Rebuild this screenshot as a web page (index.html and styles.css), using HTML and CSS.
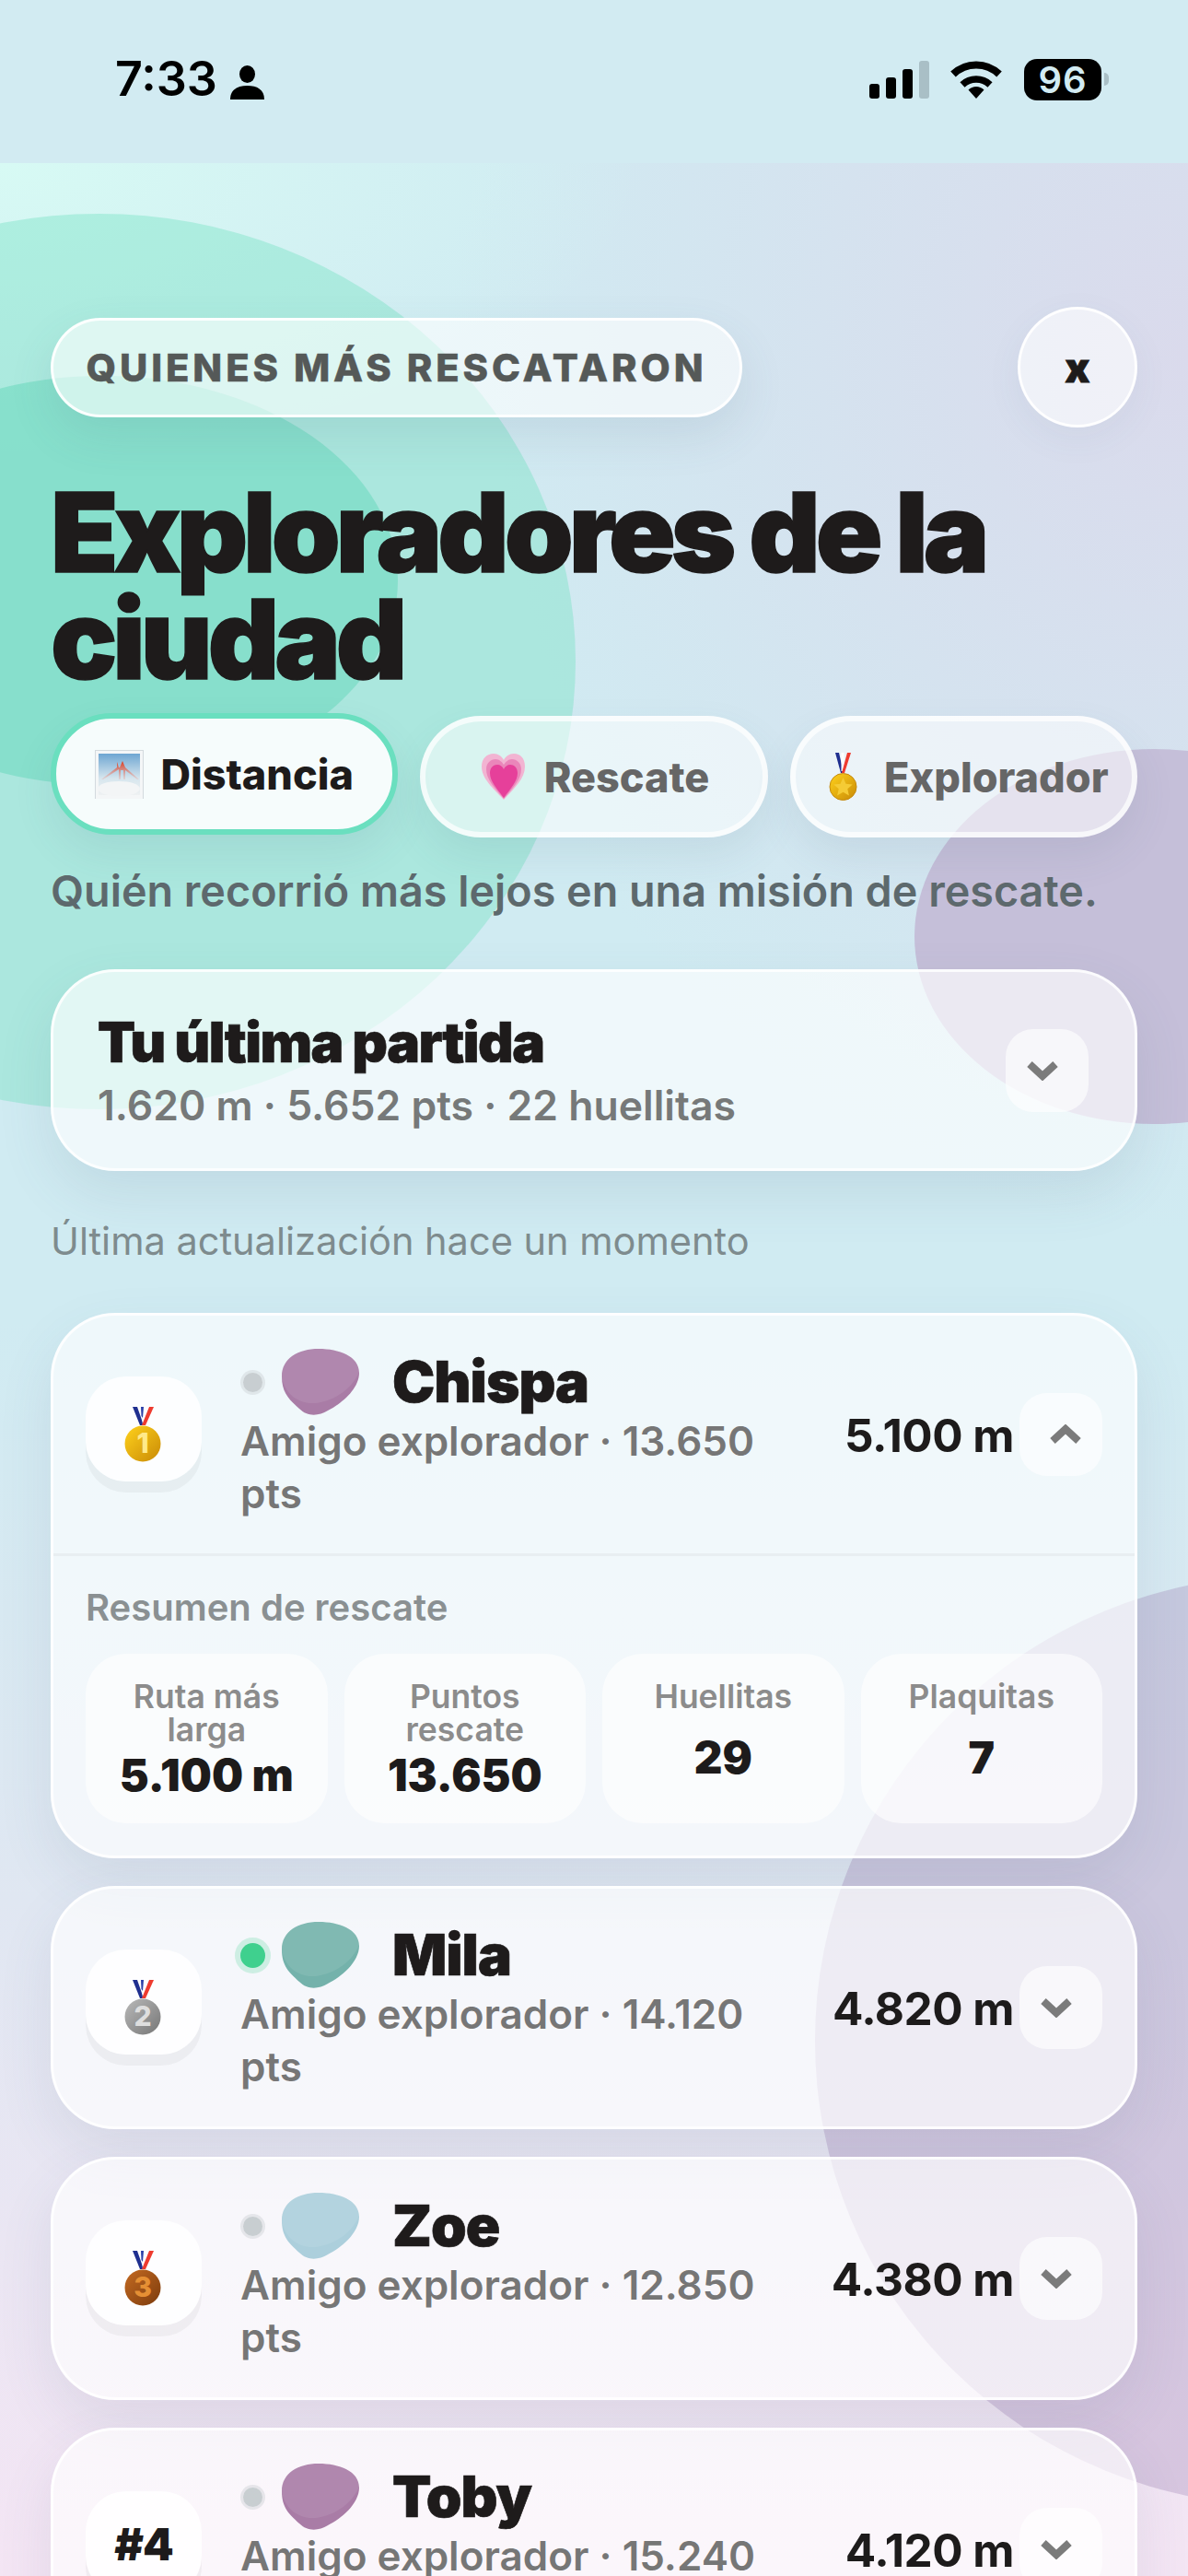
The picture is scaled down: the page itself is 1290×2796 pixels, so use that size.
FILE: index.html
```html
<!DOCTYPE html>
<html lang="es">
<head>
  <meta charset="UTF-8" />
  <meta name="viewport" content="width=device-width, initial-scale=1.0" />
  <title>Exploradores de la ciudad</title>
  <link rel="stylesheet" href="styles.css">
</head>
<body>

<svg class="defs" width="0" height="0">
  <defs>
    <linearGradient id="gold" x1="0" y1="0" x2="1" y2="1">
      <stop offset="0" stop-color="#ffd21c"/>
      <stop offset="1" stop-color="#c98a06"/>
    </linearGradient>
    <linearGradient id="silver" x1="0" y1="0" x2="1" y2="1">
      <stop offset="0" stop-color="#b9b9b9"/>
      <stop offset="1" stop-color="#767676"/>
    </linearGradient>
    <linearGradient id="bronze" x1="0" y1="0" x2="1" y2="1">
      <stop offset="0" stop-color="#c46a22"/>
      <stop offset="1" stop-color="#7c3b0c"/>
    </linearGradient>
    <linearGradient id="sky" x1="0" y1="0" x2="0" y2="1">
      <stop offset="0" stop-color="#6ea6d2"/>
      <stop offset="0.6" stop-color="#d7e6ee"/>
      <stop offset="1" stop-color="#eef1f2"/>
    </linearGradient>
    <linearGradient id="fog" x1="0" y1="0" x2="0" y2="1">
      <stop offset="0" stop-color="#e03a1a"/>
      <stop offset="1" stop-color="#f28a78" stop-opacity="0.2"/>
    </linearGradient>
    <symbol id="ribbon" viewBox="0 0 40 60">
      <path d="M9 0h5l7 20h-4z" fill="#1f2f8f"/>
      <path d="M18 0h3l1 14-2 6z" fill="#fff"/>
      <path d="M18 0h3l-1 12-1.500-2z" fill="#2b3fa8"/>
      <path d="M27 0h5l-9 20h-4z" fill="#ee3b2f"/>
    </symbol>
    <symbol id="chev" viewBox="0 0 36 22">
      <path d="M4 4l14 13L32 4" fill="none" stroke="currentColor" stroke-width="8" stroke-linejoin="miter"/>
    </symbol>
    <symbol id="blob" viewBox="0 0 84 72">
      <path d="M0 30C0 10 18 0 40 0c22 0 44 8 44 26 0 18-20 34-34 41-10 6-22 7-31-2C8 55 0 48 0 30z" fill="currentColor"/>
      <path d="M0 30C0 10 18 0 40 0c22 0 44 8 44 25-8 20-32 35-54 34C12 57 2 44 0 30z" fill="#fff" fill-opacity="0.09"/>
    </symbol>
  </defs>
</svg>

<div class="status">
  <div class="status-left">
    <span class="clock">7:33</span>
    <svg class="person" viewBox="0 0 37 37"><ellipse cx="18.500" cy="9.500" rx="8.500" ry="9.500"/><path d="M0 37c0-11 8-15 18.500-15S37 26 37 37z"/></svg>
  </div>
  <div class="status-right">
    <div class="signal"><i class="b1"></i><i class="b2"></i><i class="b3"></i><i class="b4"></i></div>
    <svg class="wifi" viewBox="0 0 58 42">
      <path d="M4 15.500a36 36 0 0 1 50 0" fill="none" stroke="#000" stroke-width="8"/>
      <path d="M14 27a22 22 0 0 1 30 0" fill="none" stroke="#000" stroke-width="7.500"/>
      <path d="M20.500 32.500a12 12 0 0 1 17 0L29 42z"/>
    </svg>
    <div class="battery"><span>96</span></div>
    <div class="nub"></div>
  </div>
</div>

<div class="page">
  <div class="blob-bg green-a"></div>
  <div class="blob-bg green-b"></div>
  <div class="blob-bg purple-a"></div>
  <div class="blob-bg purple-b"></div>

  <div class="top-row">
    <div class="eyebrow">QUIENES MÁS RESCATARON</div>
    <button class="close">x</button>
  </div>

  <h1>Exploradores de la ciudad</h1>

  <div class="tabs">
    <div class="tab active">
      <svg class="tab-icon" viewBox="0 0 53 53">
        <rect x="0.500" y="0.500" width="52" height="53" fill="#f4f6f7" stroke="#d3dade"/>
        <rect x="4" y="4" width="45" height="45" fill="url(#sky)"/>
        <path d="M24 13l2 6h1l3-7 3 7 15 13h-2L33 22v10h-2V22l-3 0v10h-2V21L9 32H7l17-13z" fill="url(#fog)"/>
        <ellipse cx="26" cy="42" rx="23" ry="8" fill="#f3f5f6"/>
      </svg>
      <span>Distancia</span>
    </div>
    <div class="tab">
      <svg class="tab-icon" viewBox="0 0 53 53">
        <path d="M27 51C15 38 3 28 3 15 3 6 9 1 16 1c5 0 9 3 11 7 2-4 6-7 11-7 7 0 12 5 12 14 0 13-11 23-23 36z" fill="#f2b4d2"/>
        <path d="M27 50C17 38 8 29 8 18c0-7 5-11 10-11 4 0 7 3 9 6 2-3 5-6 9-6 5 0 10 4 10 11 0 11-9 20-19 32z" fill="#ea86ba"/>
        <path d="M27 49C19 38 12 31 12 22c0-6 4-9 8-9 3 0 6 2 7 5 1-3 4-5 7-5 4 0 8 3 8 9 0 9-7 16-15 27z" fill="#e6409a"/>
      </svg>
      <span>Rescate</span>
    </div>
    <div class="tab">
      <svg class="tab-icon" viewBox="0 0 53 53">
        <path d="M18 0h4l5 22h-3z" fill="#1f2f8f"/>
        <path d="M24.500 0h3v20h-3z" fill="#fff"/>
        <path d="M31 0h4l-7 22h-3z" fill="#ee3b2f"/>
        <circle cx="26.500" cy="37" r="14.500" fill="url(#gold)" stroke="#c58a10"/>
        <path d="M26.500 27l3 6.700 7.200.7-5.400 4.800 1.600 7.200-6.400-3.700-6.400 3.700 1.600-7.200-5.400-4.800 7.200-.7z" fill="#f5cb35"/>
      </svg>
      <span>Explorador</span>
    </div>
  </div>

  <p class="lead">Quién recorrió más lejos en una misión de rescate.</p>

  <div class="last-run">
    <div class="last-text">
      <h2>Tu última partida</h2>
      <p>1.620 m · 5.652 pts · 22 huellitas</p>
    </div>
    <div class="toggle"><svg class="chev down"><use href="#chev"/></svg></div>
  </div>

  <p class="updated">Última actualización hace un momento</p>

  <div class="card">
    <div class="row">
      <div class="rank">
        <svg class="medal" viewBox="0 0 40 60">
          <use href="#ribbon"/>
          <circle cx="20" cy="40" r="19.500" fill="url(#gold)"/>
          <text x="20" y="50" class="medal-num num-gold">1</text>
        </svg>
      </div>
      <div class="who">
        <div class="name-row">
          <i class="dot"></i>
          <svg class="avatar lilac"><use href="#blob"/></svg>
          <span class="name">Chispa</span>
        </div>
        <p class="meta">Amigo explorador · 13.650 pts</p>
      </div>
      <div class="dist">5.100 m</div>
      <div class="toggle"><svg class="chev up"><use href="#chev"/></svg></div>
    </div>
    <div class="summary">
      <p class="summary-title">Resumen de rescate</p>
      <div class="stats">
        <div class="stat"><span class="stat-label">Ruta más larga</span><b>5.100 m</b></div>
        <div class="stat"><span class="stat-label">Puntos rescate</span><b>13.650</b></div>
        <div class="stat"><span class="stat-label">Huellitas</span><b>29</b></div>
        <div class="stat"><span class="stat-label">Plaquitas</span><b>7</b></div>
      </div>
    </div>
  </div>

  <div class="card">
    <div class="row">
      <div class="rank">
        <svg class="medal" viewBox="0 0 40 60">
          <use href="#ribbon"/>
          <circle cx="20" cy="40" r="19.500" fill="url(#silver)"/>
          <text x="20" y="50" class="medal-num num-silver">2</text>
        </svg>
      </div>
      <div class="who">
        <div class="name-row">
          <i class="dot on"></i>
          <svg class="avatar teal"><use href="#blob"/></svg>
          <span class="name">Mila</span>
        </div>
        <p class="meta">Amigo explorador · 14.120 pts</p>
      </div>
      <div class="dist">4.820 m</div>
      <div class="toggle"><svg class="chev down"><use href="#chev"/></svg></div>
    </div>
  </div>

  <div class="card">
    <div class="row">
      <div class="rank">
        <svg class="medal" viewBox="0 0 40 60">
          <use href="#ribbon"/>
          <circle cx="20" cy="40" r="19.500" fill="url(#bronze)"/>
          <text x="20" y="50" class="medal-num num-bronze">3</text>
        </svg>
      </div>
      <div class="who">
        <div class="name-row">
          <i class="dot"></i>
          <svg class="avatar sky"><use href="#blob"/></svg>
          <span class="name">Zoe</span>
        </div>
        <p class="meta">Amigo explorador · 12.850 pts</p>
      </div>
      <div class="dist">4.380 m</div>
      <div class="toggle"><svg class="chev down"><use href="#chev"/></svg></div>
    </div>
  </div>

  <div class="card">
    <div class="row">
      <div class="rank rank-text">#4</div>
      <div class="who">
        <div class="name-row">
          <i class="dot"></i>
          <svg class="avatar lilac"><use href="#blob"/></svg>
          <span class="name">Toby</span>
        </div>
        <p class="meta">Amigo explorador · 15.240 pts</p>
      </div>
      <div class="dist">4.120 m</div>
      <div class="toggle"><svg class="chev down"><use href="#chev"/></svg></div>
    </div>
  </div>
</div>

</body>
</html>
```

FILE: styles.css
```css
* {
  margin: 0;
  padding: 0;
  box-sizing: border-box;
}

html, body {
  width: 1290px;
  height: 2796px;
  overflow: hidden;
}

body {
  background-color: #d2ebf2;
  font-family: Inter, 'Noto Sans', sans-serif;
  color: #1d1b1b;
}

.defs {
  position: absolute;
}

/* status bar */
.status {
  height: 177px;
  padding: 64px 86px 0 125px;
  display: flex;
  justify-content: space-between;
  align-items: flex-start;
  background-color: #d2ebf2;
}

.status-left {
  display: flex;
  align-items: center;
  gap: 14px;
  height: 44px;
}

.clock {
  font-size: 52px;
  font-weight: 600;
  line-height: 44px;
  color: #000;
}

.person {
  width: 37px;
  height: 37px;
  margin-top: 7px;
}

.status-right {
  display: flex;
  align-items: flex-start;
}

.signal {
  display: flex;
  align-items: flex-end;
  gap: 7px;
  height: 43px;
  margin-right: 22px;
}

.signal i {
  display: block;
  width: 11px;
  border-radius: 3px;
  background-color: #000;
}

.signal .b1 { height: 16px; }
.signal .b2 { height: 23px; }
.signal .b3 { height: 32px; }
.signal .b4 { height: 41px; background-color: #a9bfc6; }

.wifi {
  width: 58px;
  height: 42px;
  margin: 1px 23px 0 0;
}

.battery {
  width: 84px;
  height: 45px;
  border-radius: 14px;
  background-color: #000;
  display: flex;
  align-items: center;
  justify-content: center;
}

.battery span {
  font-size: 40px;
  font-weight: 600;
  letter-spacing: 1px;
  color: #d2ebf2;
}

.nub {
  width: 5px;
  height: 14px;
  margin: 15px 0 0 3px;
  border-radius: 0 5px 5px 0;
  background-color: #a9bfc6;
}

/* main panel */
.page {
  position: relative;
  height: 2619px;
  padding: 156px 55px 0;
  overflow: hidden;
  background:
    radial-gradient(ellipse 700px 320px at 0 0, #d7faf4, rgba(215, 250, 244, 0)),
    radial-gradient(ellipse 800px 950px at 100% 8%, #dadaec, rgba(218, 218, 236, 0)),
    linear-gradient(180deg, #d0ebf2 0, #d0ebf2 48%, #e0e7f2 72%, #f4e5f4 100%);
}

.page > * {
  position: relative;
}

.page > .blob-bg {
  position: absolute;
  border-radius: 50%;
}

.green-a {
  left: -410px;
  top: 55px;
  width: 1035px;
  height: 972px;
  background-color: rgba(118, 226, 196, 0.42);
}

.green-b {
  left: -210px;
  top: 231px;
  width: 642px;
  height: 444px;
  background-color: rgba(100, 215, 185, 0.5);
}

.purple-a {
  left: 993px;
  top: 636px;
  width: 520px;
  height: 407px;
  background-color: #c5bfd9;
}

.purple-b {
  left: 885px;
  top: 1533px;
  width: 1020px;
  height: 1010px;
  background-color: rgba(160, 130, 180, 0.32);
}

.top-row {
  display: flex;
  justify-content: space-between;
  align-items: center;
  height: 131px;
}

.eyebrow {
  width: 751px;
  height: 108px;
  border: 3px solid rgba(255, 255, 255, 0.9);
  border-radius: 54px;
  background-color: rgba(255, 255, 255, 0.6);
  box-shadow: 0 20px 50px rgba(70, 100, 120, 0.12);
  color: #555958;
  font-size: 41.700px;
  font-weight: 800;
  letter-spacing: 3.900px;
  line-height: 102px;
  text-align: center;
  white-space: nowrap;
  -webkit-text-stroke: 0.5px #555958;
}

.close {
  width: 130px;
  height: 131px;
  border: 3px solid rgba(255, 255, 255, 0.9);
  border-radius: 50%;
  background-color: rgba(255, 255, 255, 0.6);
  box-shadow: 0 12px 40px rgba(70, 100, 120, 0.06);
  color: #1d1b1b;
  font-family: inherit;
  font-size: 44px;
  font-weight: 900;
  line-height: 1;
  -webkit-text-stroke: 1px #1d1b1b;
}

h1 {
  width: 1100px;
  margin-top: 56px;
  font-size: 120px;
  font-weight: 900;
  line-height: 116px;
  letter-spacing: -5px;
  color: #1e1b1b;
  -webkit-text-stroke: 1.500px #1e1b1b;
}

.tabs {
  display: grid;
  grid-template-columns: repeat(3, 1fr);
  gap: 24px;
  margin-top: 25px;
}

.tab {
  height: 132px;
  border: 6px solid rgba(255, 255, 255, 0.7);
  border-radius: 66px;
  background-color: rgba(255, 255, 255, 0.55);
  box-shadow: 0 20px 44px rgba(70, 100, 120, 0.1);
  display: flex;
  align-items: center;
  justify-content: center;
  gap: 18px;
  color: #666;
  font-size: 45px;
  font-weight: 800;
  white-space: nowrap;
}

.tab.active {
  transform: translateY(-3px);
  border-color: #6adfbf;
  background-color: #f6fcfc;
  color: #1d1b1b;
}

.tab-icon {
  width: 53px;
  height: 53px;
  flex: none;
}

.lead {
  margin-top: 30px;
  font-size: 46.700px;
  font-weight: 600;
  line-height: 56px;
  color: #5d696d;
  white-space: nowrap;
}

.last-run {
  display: flex;
  justify-content: space-between;
  align-items: center;
  height: 219px;
  margin-top: 57px;
  padding: 0 50px 0 48px;
  border: 3px solid rgba(255, 255, 255, 0.8);
  border-radius: 70px;
  background-color: rgba(255, 255, 255, 0.66);
  box-shadow: 0 24px 60px rgba(70, 100, 120, 0.12);
}

.last-text {
  padding-bottom: 3px;
}

.last-run h2 {
  font-size: 60px;
  font-weight: 900;
  letter-spacing: -1.500px;
  line-height: 72px;
  color: #1e1b1b;
  -webkit-text-stroke: 0.7px #1e1b1b;
}

.last-run p {
  margin-top: 8px;
  font-size: 44.500px;
  font-weight: 600;
  line-height: 50px;
  color: #767979;
  white-space: nowrap;
}

.toggle {
  flex: none;
  width: 90px;
  height: 90px;
  border-radius: 30px;
  background-color: rgba(255, 255, 255, 0.62);
  display: flex;
  align-items: center;
  justify-content: center;
}

.chev {
  width: 36px;
  height: 22px;
  color: #7b7b7b;
}

.chev.down {
  margin-right: 10px;
}

.chev.up {
  margin-left: 10px;
  transform: rotate(180deg);
}

.updated {
  margin-top: 51px;
  margin-bottom: 53px;
  font-size: 41.500px;
  font-weight: 400;
  line-height: 50px;
  color: #7e8b8e;
  white-space: nowrap;
}

.card {
  margin-bottom: 30px;
  border: 3px solid rgba(255, 255, 255, 0.85);
  border-radius: 70px;
  background-color: rgba(255, 255, 255, 0.66);
  box-shadow: 0 24px 60px rgba(70, 90, 120, 0.1);
}

.row {
  display: flex;
  align-items: center;
  height: 258px;
  padding: 0 35px;
}

.rank {
  flex: none;
  width: 126px;
  height: 114px;
  margin-bottom: 12px;
  border-radius: 44px;
  background-color: rgba(255, 255, 255, 0.85);
  box-shadow: 0 12px 0 rgba(0, 0, 0, 0.04);
  display: flex;
  align-items: center;
  justify-content: center;
}

.rank-text {
  font-size: 48px;
  font-weight: 900;
  letter-spacing: -1px;
}

.medal {
  width: 40px;
  height: 60px;
  margin: 12px 2px 0 0;
}

.medal-num {
  font-size: 30px;
  font-weight: 800;
  text-anchor: middle;
}

.num-gold { fill: #ffe98a; }
.num-silver { fill: #dedede; }
.num-bronze { fill: #e58f34; }

.who {
  flex: 1;
  min-width: 0;
  margin-left: 42px;
}

.name-row {
  display: flex;
  align-items: center;
  height: 72px;
}

.dot {
  display: block;
  flex: none;
  width: 21px;
  height: 21px;
  margin: 0 21px 0 3px;
  border-radius: 50%;
  background-color: #c8ced1;
  box-shadow: 0 0 0 3px rgba(200, 205, 210, 0.4);
}

.dot.on {
  width: 27px;
  height: 27px;
  margin: 0 18px 0 0;
  background-color: #3fd08e;
  box-shadow: 0 0 0 6px rgba(63, 208, 142, 0.22);
}

.avatar {
  flex: none;
  width: 84px;
  height: 72px;
}

.lilac { color: #a97ca6; }
.teal { color: #74b2ab; }
.sky { color: #accfdc; }

.name {
  margin-left: 36px;
  font-size: 62px;
  font-weight: 900;
  letter-spacing: -1px;
  line-height: 72px;
  color: #1e1b1b;
  -webkit-text-stroke: 0.7px #1e1b1b;
}

.meta {
  max-width: 600px;
  font-size: 44px;
  font-weight: 600;
  line-height: 57px;
  color: #767676;
}

.dist {
  flex: none;
  margin: 2px 6px 0 0;
  font-size: 49.500px;
  font-weight: 700;
  letter-spacing: -0.500px;
  color: #1d1b1b;
}

.summary {
  padding: 33px 35px 35px;
  border-top: 3px solid #e8eef1;
}

.summary-title {
  font-size: 40px;
  font-weight: 600;
  line-height: 46px;
  color: #8a9092;
}

.stats {
  display: grid;
  grid-template-columns: repeat(4, 1fr);
  gap: 18px;
  margin-top: 27px;
}

.stat {
  height: 184px;
  padding-top: 29px;
  border-radius: 44px;
  background-color: rgba(255, 255, 255, 0.6);
  text-align: center;
}

.stat-label {
  display: block;
  min-height: 53px;
  padding: 0 20px;
  font-size: 35.500px;
  font-weight: 600;
  line-height: 36px;
  color: #8c8c8c;
}

.stat b {
  display: block;
  margin-top: 3px;
  font-size: 48px;
  font-weight: 900;
  line-height: 56px;
  color: #1d1b1b;
}
```
